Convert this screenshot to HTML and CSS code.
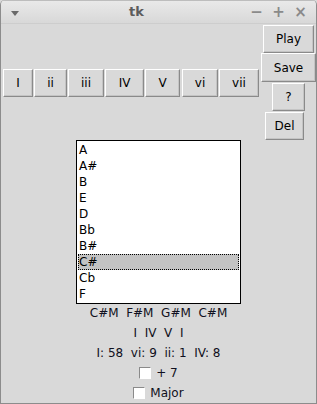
FILE: index.html
```html
<!doctype html>
<html>
<head>
  <title>tk</title>
  <meta charset='UTF-8'>
  <link rel="stylesheet" href="styles.css">
</head>
<body>
  <div class="window">
    <header class="titlebar">
      <span class="menu-arrow"></span>
      <span class="title">tk</span>
      <span class="controls">
        <span class="ctl">&minus;</span>
        <span class="ctl">+</span>
        <span class="ctl">&times;</span>
      </span>
    </header>
    <main class="content">
      <div class="top">
        <div class="chords">
          <button class="btn w30">I</button>
          <button class="btn w33">ii</button>
          <button class="btn w36">iii</button>
          <button class="btn w39">IV</button>
          <button class="btn w35">V</button>
          <button class="btn w36 vi">vi</button>
          <button class="btn w40">vii</button>
        </div>
        <div class="actions">
          <button class="btn play">Play</button>
          <button class="btn save">Save</button>
          <button class="btn help">?</button>
          <button class="btn del">Del</button>
        </div>
      </div>
      <ul class="listbox">
        <li>A</li>
        <li>A#</li>
        <li>B</li>
        <li>E</li>
        <li>D</li>
        <li>Bb</li>
        <li>B#</li>
        <li class="selected">C#</li>
        <li>Cb</li>
        <li>F</li>
      </ul>
      <div class="label first">C#M  F#M  G#M  C#M</div>
      <div class="label">I  IV  V  I</div>
      <div class="label">I: 58  vi: 9  ii: 1  IV: 8</div>
      <label class="label check"><span class="box"></span>+ 7</label>
      <label class="label check"><span class="box"></span>Major</label>
    </main>
  </div>
</body>
</html>
```

FILE: styles.css
```css
html, body { height: 100% }
body {
  margin: 0;
  background: #d9d9d9;
  font: 12px 'DejaVu Sans', sans-serif;
  color: #000 }
.window {
  height: 404px;
  box-sizing: border-box;
  border: 1px solid #8c8c8c;
  border-top: none;
  border-radius: 5px 5px 0 0;
  overflow: hidden;
  display: flex;
  flex-flow: column }
  .titlebar {
    flex: none;
    display: flex;
    align-items: center;
    position: relative;
    background: linear-gradient(#e9e9e9, #d8d8d8);
    border-bottom: 1px solid #cdcdcd;
    border-top: 1px solid #bdbdbd;
    box-sizing: border-box;
    height: 24px }
    .menu-arrow {
      width: 0;
      height: 0;
      margin: 2px 0 0 10px;
      border-left: 4px solid transparent;
      border-right: 4px solid transparent;
      border-top: 5px solid #6a6a6a }
    .title {
      position: absolute;
      left: 128px;
      top: 3px;
      font: bold 13px 'DejaVu Sans', sans-serif;
      color: #5c5c5c }
    .controls {
      margin-left: auto;
      display: flex;
      gap: 9px;
      margin-right: 9px }
      .ctl {
        width: 13px;
        text-align: center;
        font: bold 15px 'DejaVu Sans', sans-serif;
        color: #8a8a8a }
  .content {
    flex: 1;
    display: flex;
    flex-flow: column;
    align-items: center }
    .top {
      align-self: stretch;
      display: flex;
      align-items: center;
      justify-content: space-between;
      padding: 1px 0 0 2px }
    .btn {
      font: 12px 'DejaVu Sans', sans-serif;
      color: #000;
      background: #d9d9d9;
      border: 1px solid;
      border-color: #fff #8a8a8a #8a8a8a #fff;
      box-shadow: inset -1px -1px #c4c4c4;
      height: 28px;
      padding: 0;
      margin: 0;
      flex: none }
    .chords {
      display: flex;
      gap: 1px }
      .w30 { width: 30px }
      .w33 { width: 33px }
      .w35 { width: 35px }
      .w36 { width: 36px }
      .w39 { width: 39px }
      .w40 { width: 40px }
      .vi { margin-left: 1px }
    .actions {
      width: 55px;
      display: flex;
      flex-flow: column;
      align-items: center }
      .play { width: 51px }
      .save { width: 55px; height: 29px }
      .help { width: 33px; margin-top: 1px }
      .del { width: 39px; align-self: flex-end; margin: 1px 12px 0 0 }
    .listbox {
      list-style: none;
      margin: 0;
      padding: 1px;
      width: 165px;
      height: 164px;
      box-sizing: border-box;
      border: 1px solid #000;
      background: #fff }
      .listbox li {
        height: 16px;
        line-height: 16px;
        padding-left: 1px }
      .listbox .selected {
        background: #c3c3c3;
        outline: 1px dotted #000;
        outline-offset: -1px }
    .label {
      white-space: pre;
      height: 20px;
      line-height: 20px;
      color: #101020 }
    .label.first { height: 19px; line-height: 19px }
    .check {
      display: flex;
      align-items: center;
      gap: 5px }
      .box {
        width: 10px;
        height: 10px;
        background: #fff;
        border: 1px solid;
        border-color: #8a8a8a #fff #fff #8a8a8a }
```
